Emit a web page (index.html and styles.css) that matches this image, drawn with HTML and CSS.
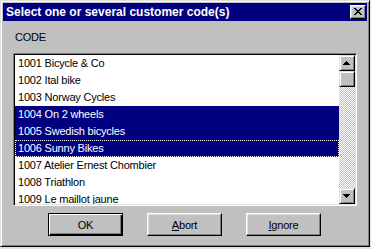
FILE: index.html
```html
<!DOCTYPE html>
<html>
<head>
<meta charset="utf-8">
<title>Select customer codes</title>
<link rel="stylesheet" href="styles.css">
</head>
<body>
<div class="window">
  <div class="titlebar">
    <span class="title">Select one or several customer code(s)</span>
    <button class="close" aria-label="Close">
      <svg width="8" height="7" viewBox="0 0 8 7" shape-rendering="crispEdges">
        <rect x="0" y="0" width="2" height="1"/><rect x="6" y="0" width="2" height="1"/>
        <rect x="1" y="1" width="2" height="1"/><rect x="5" y="1" width="2" height="1"/>
        <rect x="2" y="2" width="4" height="1"/>
        <rect x="3" y="3" width="2" height="1"/>
        <rect x="2" y="4" width="4" height="1"/>
        <rect x="1" y="5" width="2" height="1"/><rect x="5" y="5" width="2" height="1"/>
        <rect x="0" y="6" width="2" height="1"/><rect x="6" y="6" width="2" height="1"/>
      </svg>
    </button>
  </div>
  <div class="content">
    <div class="label">CODE</div>
    <div class="listbox">
      <ul class="rows">
        <li>1001 Bicycle &amp; Co</li>
        <li>1002 Ital bike</li>
        <li>1003 Norway Cycles</li>
        <li class="sel">1004 On 2 wheels</li>
        <li class="sel">1005 Swedish bicycles</li>
        <li class="sel focus">1006 Sunny Bikes</li>
        <li>1007 Atelier Ernest Chombier</li>
        <li>1008 Triathlon</li>
        <li>1009 Le maillot jaune</li>
      </ul>
      <div class="scrollbar">
        <div class="sbtn">
          <svg class="arrow" width="7" height="4" viewBox="0 0 7 4" shape-rendering="crispEdges">
            <rect x="3" y="0" width="1" height="1"/><rect x="2" y="1" width="3" height="1"/>
            <rect x="1" y="2" width="5" height="1"/><rect x="0" y="3" width="7" height="1"/>
          </svg>
        </div>
        <div class="sbtn thumb"></div>
        <div class="track"></div>
        <div class="sbtn">
          <svg class="arrow" width="7" height="4" viewBox="0 0 7 4" shape-rendering="crispEdges">
            <rect x="0" y="0" width="7" height="1"/><rect x="1" y="1" width="5" height="1"/>
            <rect x="2" y="2" width="3" height="1"/><rect x="3" y="3" width="1" height="1"/>
          </svg>
        </div>
      </div>
    </div>
    <div class="buttons">
      <button class="btn default">OK</button>
      <button class="btn"><u>A</u>bort</button>
      <button class="btn"><u>I</u>gnore</button>
    </div>
  </div>
</div>
</body>
</html>
```
FILE: styles.css
```css
html, body {
  margin: 0;
  padding: 0;
}
body {
  background: #e0e0e0;
  font-family: "Liberation Sans", Arial, sans-serif;
  font-size: 11px;
  color: #000;
}
.window {
  width: 370px;
  height: 247px;
  box-sizing: border-box;
  background: #c0c0c0;
  border: 1px solid;
  border-color: #dfdfdf #000 #000 #dfdfdf;
  box-shadow: inset 1px 1px #fff, inset -1px -1px #808080;
  padding: 2px;
  display: flex;
  flex-direction: column;
}
.titlebar {
  height: 18px;
  flex: none;
  background: #000080;
  display: flex;
  align-items: center;
  justify-content: space-between;
  padding: 0 1px 0 3px;
}
.title {
  color: #fff;
  font-weight: bold;
  font-size: 12px;
  line-height: 18px;
  white-space: nowrap;
}
.close {
  width: 16px;
  height: 14px;
  box-sizing: border-box;
  padding: 0;
  margin: 0;
  background: #c0c0c0;
  border: 1px solid;
  border-color: #fff #000 #000 #fff;
  box-shadow: inset -1px -1px #808080, inset 1px 1px #dfdfdf;
  display: flex;
  align-items: flex-start;
  justify-content: flex-start;
}
.close svg {
  display: block;
  margin: 2px 0 0 3px;
  fill: #000;
}
.content {
  flex: 1;
  padding: 10px 10px 0 10px;
  display: flex;
  flex-direction: column;
}
.label {
  line-height: 13px;
  height: 13px;
  padding-left: 2px;
  letter-spacing: -0.2px;
}
.listbox {
  margin-top: 9px;
  width: 344px;
  height: 153px;
  box-sizing: border-box;
  border: 1px solid;
  border-color: #808080 #fff #fff #808080;
  box-shadow: inset 1px 1px #000, inset -1px -1px #dfdfdf;
  padding: 1px;
  background: #fff;
  display: flex;
}
.rows {
  flex: 1;
  margin: 0;
  padding: 0;
  list-style: none;
  overflow: hidden;
}
.rows li {
  height: 17px;
  line-height: 17px;
  padding-left: 3px;
  letter-spacing: -0.2px;
  white-space: nowrap;
}
.rows li.sel {
  background: #000080;
  color: #fff;
}
.rows li.focus {
  outline: 1px dotted #fff;
  outline-offset: -1px;
}
.scrollbar {
  width: 16px;
  flex: none;
  display: flex;
  flex-direction: column;
}
.sbtn {
  height: 16px;
  flex: none;
  box-sizing: border-box;
  border: 1px solid;
  border-color: #dfdfdf #000 #000 #dfdfdf;
  box-shadow: inset 1px 1px #fff, inset -1px -1px #808080;
  background: #c0c0c0;
}
.arrow {
  display: block;
  margin: 5px 0 0 3px;
  fill: #000;
}
.track {
  flex: 1;
  background: repeating-conic-gradient(#c0c0c0 0 25%, #fff 0 50%) 0 0 / 2px 2px;
}
.buttons {
  display: flex;
  gap: 24px;
  margin-top: 7px;
  padding-left: 35px;
}
.btn {
  width: 75px;
  height: 23px;
  box-sizing: border-box;
  margin: 0;
  padding: 0;
  background: #c0c0c0;
  border: 1px solid;
  border-color: #fff #000 #000 #fff;
  box-shadow: inset -1px -1px #808080, inset 1px 1px #dfdfdf;
  font-family: "Liberation Sans", Arial, sans-serif;
  font-size: 11px;
  letter-spacing: -0.2px;
  color: #000;
}
.btn.default {
  border-color: #000;
  box-shadow: inset 1px 1px #fff, inset -1px -1px #000, inset -2px -2px #808080;
}
```
